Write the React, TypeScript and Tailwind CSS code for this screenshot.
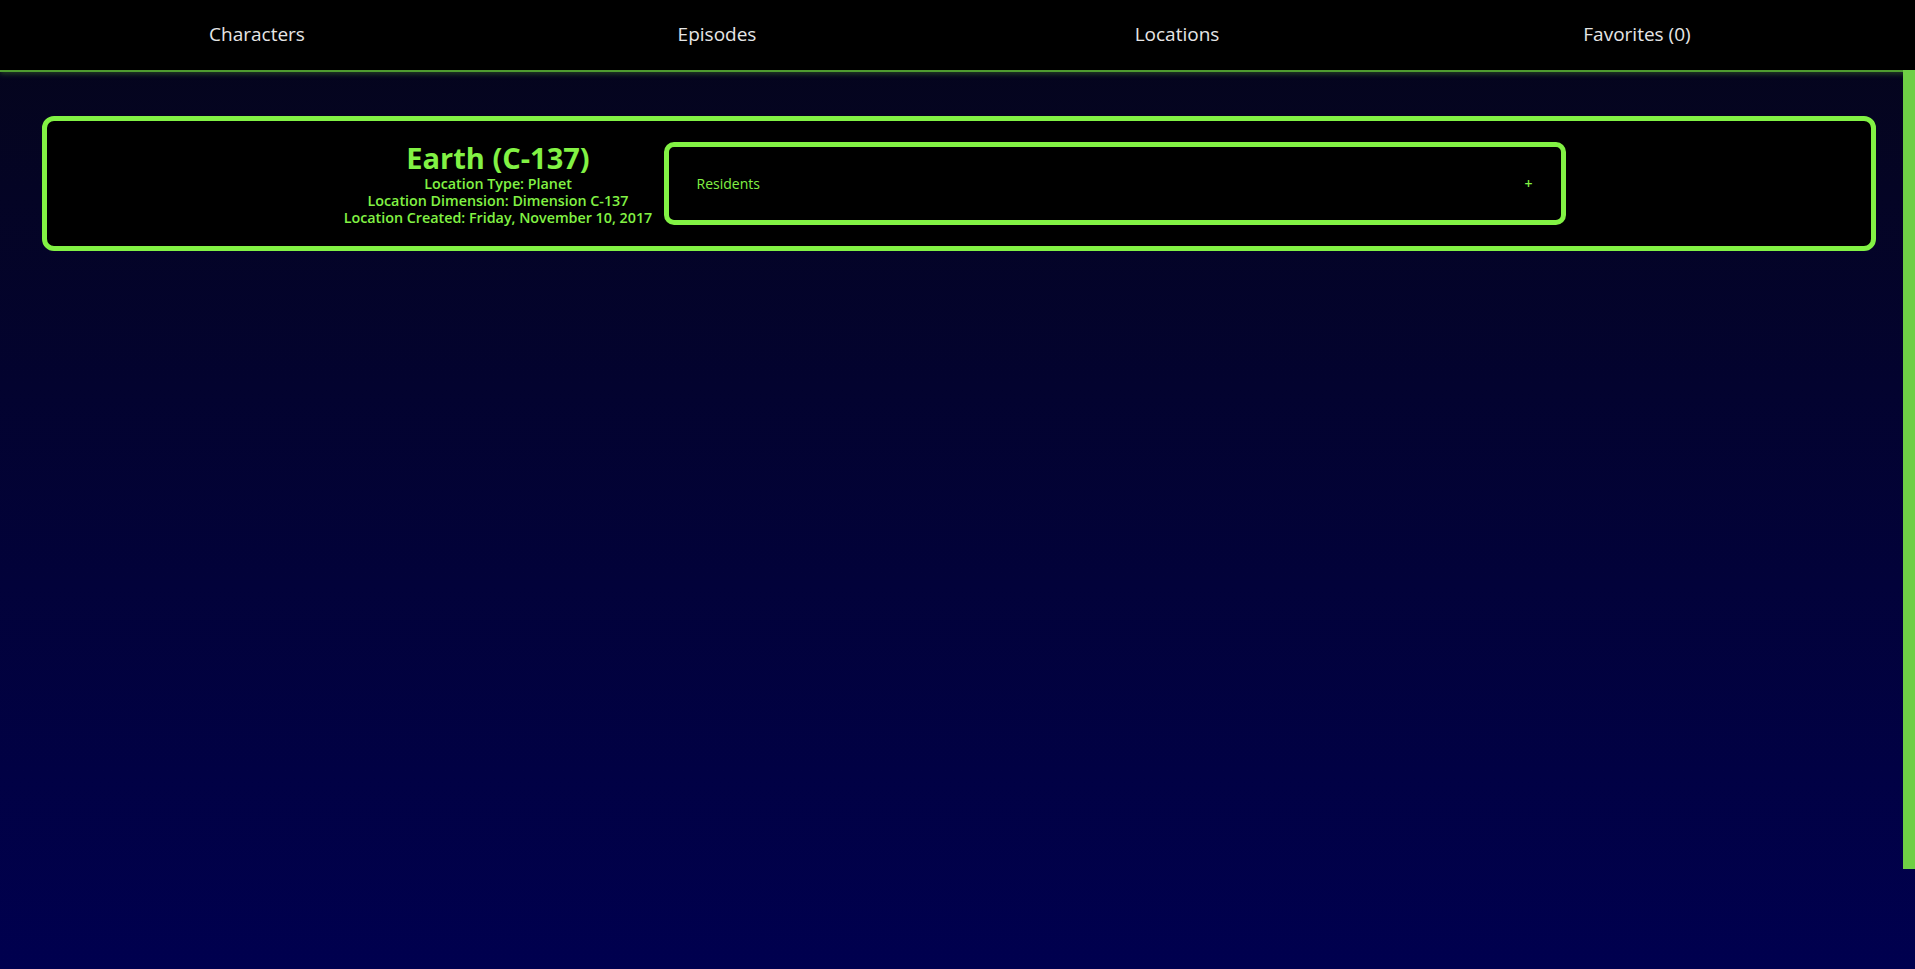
export default function App() {
  const navItems = ["Characters", "Episodes", "Locations", "Favorites (0)"];
  return (
    <div className="relative h-[969px] w-full overflow-hidden bg-[linear-gradient(to_bottom,#05051a,#00004f)] font-['Open_Sans',sans-serif]">
      <nav className="h-[72px] border-b-2 border-[#4e9c30] bg-black shadow-[0_2px_5px_rgba(90,170,50,0.35)]">
        <ul className="ml-[27px] grid h-full w-[1840px] grid-cols-4 items-center pb-[2px]">
          {navItems.map((n) => (
            <li key={n} className="text-center text-[19px] text-[#e6e6e6]">
              {n}
            </li>
          ))}
        </ul>
      </nav>
      <main className="pt-[44px]">
        <section className="ml-[42px] flex h-[135px] w-[1834px] items-center justify-center rounded-[12px] border-[5px] border-[#82f244] bg-black">
          <div className="w-[311px] whitespace-nowrap text-center font-semibold text-[#82f244]">
            <h2 className="text-[29px] font-bold leading-[34px]">Earth (C-137)</h2>
            <p className="text-[14.3px] leading-[17px]">Location Type: Planet</p>
            <p className="text-[14.3px] leading-[17px]">Location Dimension: Dimension C-137</p>
            <p className="text-[14.3px] leading-[17px]">Location Created: Friday, November 10, 2017</p>
          </div>
          <div className="ml-[10px] mr-[10px] flex h-[83px] w-[902px] items-center justify-between rounded-[10px] border-[5px] border-[#82f244] pl-[28px] pr-[28px] text-[14px] text-[#82f244]">
            <span>Residents</span>
            <span className="font-semibold">+</span>
          </div>
        </section>
      </main>
      <div className="absolute right-0 top-[70px] h-[799px] w-[12px] bg-[#6fcf45]" />
    </div>
  );
}
